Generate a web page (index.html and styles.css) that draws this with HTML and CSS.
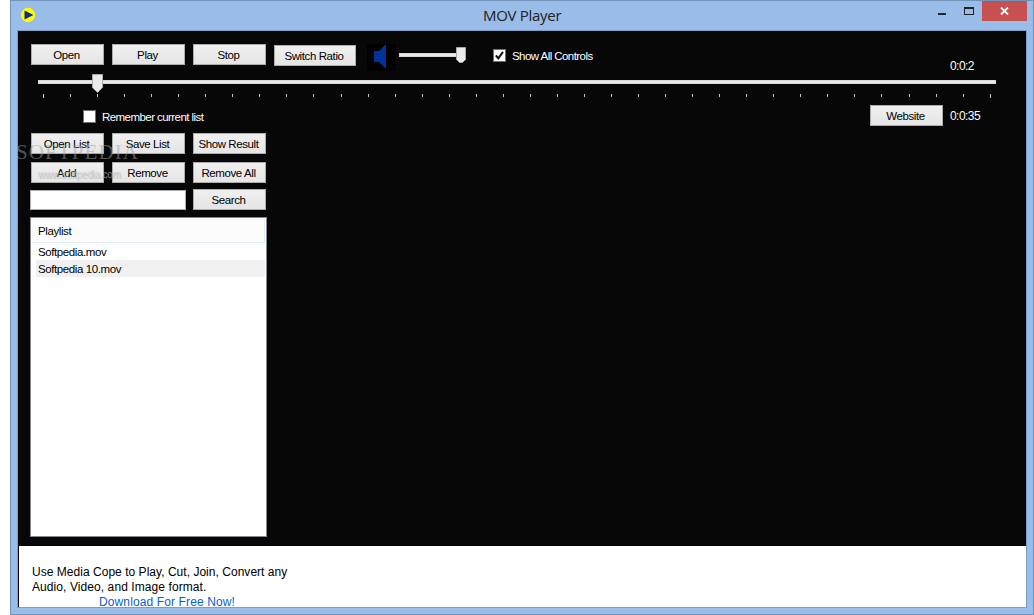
FILE: index.html
```
<!DOCTYPE html>
<html lang="en">
<head>
  <meta charset="UTF-8">
  <title>MOV Player</title>
  <link rel="stylesheet" href="styles.css">
</head>
<body>

  <div class="window">
    <div class="titlebar">
      <svg class="app-icon" width="16" height="16" viewBox="0 0 16 16">
        <circle cx="8" cy="8" r="7.2" fill="#ffff00"/>
        <path d="M4.5 3.5 L13.5 8 L4.5 12.5 Z" fill="#0a2f8c"/>
      </svg>
      <div class="title">MOV Player</div>
      <svg class="minmax" width="60" height="20" viewBox="0 0 60 20">
        <rect x="16" y="12" width="8" height="2" fill="#222"/>
        <path d="M42 6h10v8h-10z M43 8v5h8V8z" fill="#222" fill-rule="evenodd"/>
      </svg>
      <div class="close">
        <svg width="9" height="8" viewBox="0 0 9 8"><path d="M1 .5l7 7M8 .5l-7 7" stroke="#fff" stroke-width="1.8"/></svg>
      </div>
    </div>

    <div class="client">
      <div class="toolbar">
        <button class="btn">Open</button>
        <button class="btn">Play</button>
        <button class="btn">Stop</button>
        <button class="btn btn-ratio">Switch Ratio</button>
        <div class="speaker">
          <svg width="29" height="27" viewBox="0 0 29 27"><path d="M7 7h5l6-6h1v23h-1l-6-6H7z" fill="#003399"/></svg>
        </div>
        <div class="volume">
          <div class="volume-track"></div>
          <svg class="volume-thumb" width="10" height="16" viewBox="0 0 10 16"><path d="M.5.5h9v12l-3 3h-3l-3-3z" fill="#eaeaea" stroke="#aaa"/></svg>
        </div>
        <label class="check check-controls">
          <span class="box"><svg width="11" height="11" viewBox="0 0 11 11"><path d="M1.8 5.3l2.5 3L9 1.8" fill="none" stroke="#111" stroke-width="2"/></svg></span>
          <span>Show All Controls</span>
        </label>
        <div class="time time-now">0:0:2</div>
      </div>

      <div class="seek">
        <div class="seek-track"></div>
        <svg class="seek-thumb" width="11" height="19" viewBox="0 0 11 19"><path d="M.5.5h10v13l-5 5l-5-5z" fill="#eaeaea" stroke="#aaa"/></svg>
        <div class="ticks">
          <i></i><i></i><i></i><i></i><i></i><i></i><i></i><i></i><i></i><i></i><i></i><i></i>
          <i></i><i></i><i></i><i></i><i></i><i></i><i></i><i></i><i></i><i></i><i></i><i></i>
          <i></i><i></i><i></i><i></i><i></i><i></i><i></i><i></i><i></i><i></i><i></i><i></i>
        </div>
      </div>

      <div class="options">
        <label class="check check-remember">
          <span class="box"></span>
          <span>Remember current list</span>
        </label>
        <button class="btn">Website</button>
        <div class="time time-total">0:0:35</div>
      </div>

      <div class="list-panel">
        <div class="row">
          <button class="btn">Open List</button>
          <button class="btn">Save List</button>
          <button class="btn">Show Result</button>
        </div>
        <div class="row">
          <button class="btn">Add</button>
          <button class="btn">Remove</button>
          <button class="btn">Remove All</button>
        </div>
        <div class="row row-search">
          <input class="search" type="text">
          <button class="btn">Search</button>
        </div>
        <div class="playlist">
          <div class="playlist-head">Playlist</div>
          <div class="item">Softpedia.mov</div>
          <div class="item selected">Softpedia 10.mov</div>
        </div>
        <div class="watermark">
          <div class="wm-name">SOFTPEDIA</div>
          <div class="wm-url">www.softpedia.com</div>
        </div>
      </div>

      <div class="promo">
        <div>Use Media Cope to Play, Cut, Join, Convert any</div>
        <div class="promo-formats">Audio, Video, and Image format.</div>
        <a class="promo-link">Download For Free Now!</a>
      </div>
    </div>
  </div>

</body>
</html>
```
FILE: styles.css
```
* { box-sizing: border-box; }
body {
  margin: 0;
  height: 615px;
  padding-left: 10px;
  overflow: hidden;
  background: #fff;
  font: 11.5px/14px "Liberation Sans", Arial, sans-serif;
  letter-spacing: -0.4px;
}

.window {
  width: 1024px;
  height: 615px;
  border: 1px solid #7094ba;
  background: #99bce8;
}

/* title bar */
.titlebar { display: flex; height: 29px; align-items: flex-start; }
.app-icon { margin: 6px 0 0 9px; }
.title {
  width: 895px;
  padding: 4px 0 0 447px;
  font: 15px/20px "Open Sans", "Noto Sans", sans-serif;
  letter-spacing: -0.3px;
  color: #222;
}
.minmax { flex: none; margin-left: -9px; }
.close {
  display: flex;
  width: 45px;
  height: 20px;
  align-items: center;
  justify-content: center;
  background: #c75050;
}

.client {
  display: flex;
  flex-direction: column;
  width: 1010px;
  height: 578px;
  margin-left: 6px;
  border: 1px solid #7b9dc7;
  background: #070707;
}

.btn {
  flex: none;
  width: 73px;
  height: 21px;
  padding: 0 2px 0 0;
  border: 1px solid #acacac;
  background: linear-gradient(#f0f0f0, #e5e5e5);
  font: inherit;
  letter-spacing: inherit;
  color: #000;
  white-space: nowrap;
}

/* play controls */
.toolbar {
  display: flex;
  height: 43px;
  padding: 13px 0 0 13px;
  gap: 8px;
  align-items: flex-start;
}
.btn-ratio { width: 82px; margin-top: 1px; }
.speaker { width: 29px; height: 27px; margin-left: 3px; background: #000; }
.volume { position: relative; width: 67px; height: 20px; margin-left: -5px; padding-top: 9px; }
.volume-track { width: 62px; height: 4px; background: #e7eaea; border: 1px solid #d6d6d6; }
.volume-thumb { position: absolute; left: 57px; top: 3px; }

.check { display: flex; gap: 6px; color: #fff; white-space: nowrap; letter-spacing: -0.56px; }
.box { flex: none; width: 13px; height: 13px; border: 1px solid #707070; background: #fff; }
.box svg { display: block; }
.check-controls { width: 120px; margin: 5px 0 0 19px; }
.time { color: #fff; font-size: 12px; letter-spacing: -0.55px; }
.time-now { margin: 15px 0 0 329px; }

/* seek bar */
.seek { position: relative; height: 31px; padding: 6px 30px 0 20px; }
.seek-track { height: 4px; border: 1px solid #d6d6d6; background: #e7eaea; }
.seek-thumb { position: absolute; left: 74px; top: 0; }
.ticks { display: flex; justify-content: space-between; margin: 10px 5px 0; }
.ticks i { width: 1px; height: 3px; background: #c4c4c4; }
.ticks i:first-child, .ticks i:last-child { height: 4px; }

.options { display: flex; height: 28px; padding-left: 65px; }
.check-remember { width: 787px; padding-top: 5px; }
.time-total { margin: 4px 0 0 7px; }

/* playlist column */
.list-panel { position: relative; height: 413px; padding-left: 12px; }
.row { display: flex; gap: 8px; height: 29px; padding-left: 1px; }
.row-search { height: 27px; gap: 7px; padding: 0; margin-top: -2px; }
.search {
  width: 156px;
  height: 20px;
  margin: 1px 0 0;
  border: 1px solid #abadb3;
  background: #fff;
}
.playlist {
  width: 237px;
  height: 320px;
  margin-top: 1px;
  padding: 1px;
  border: 1px solid #828790;
  background: #fff;
  color: #000;
}
.playlist-head {
  height: 24px;
  padding: 5px 0 0 6px;
  border-right: 1px solid #e3ecfb;
  border-bottom: 1px solid #e3ecfb;
  background: #fcfcfc;
}
.item { height: 17px; margin-left: 4px; padding: 2px 0 0 2px; }
.selected { background: #f0f0f0; }

.watermark {
  position: absolute;
  left: -2px;
  top: 9px;
  color: rgba(160, 160, 160, 0.5);
  white-space: nowrap;
  pointer-events: none;
}
.wm-name { font: 21px/20px "Liberation Serif", serif; letter-spacing: 1.1px; }
.wm-url {
  margin: 6px 0 0 22px;
  font-size: 10px;
  letter-spacing: -0.2px;
  color: rgba(200, 200, 200, 0.6);
  text-shadow: 1px 1px 0 rgba(120, 120, 120, 0.3);
}

/* promo strip */
.promo {
  height: 61px;
  margin-left: 1px;
  padding: 19px 0 0 13px;
  background: #fff;
  color: #000;
  font-size: 12px;
  line-height: 15px;
  letter-spacing: 0.03px;
}
.promo-formats { letter-spacing: 0.08px; }
.promo-link { margin-left: 67px; letter-spacing: 0.12px; color: #0b5fd0; }
```
